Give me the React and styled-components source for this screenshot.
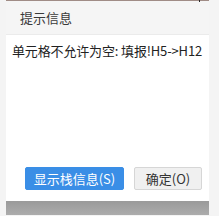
import React from "react";
import styled, { createGlobalStyle } from "styled-components";

const GlobalStyle = createGlobalStyle`
  html, body {
    margin: 0;
    padding: 0;
    background: #f4f4f4;
    font-family: "Noto Sans CJK SC", "Noto Sans", sans-serif;
  }
`;

const Page = styled.div`
  width: 219px;
  height: 216px;
  padding-left: 6px;
  box-sizing: border-box;
  overflow: hidden;
`;

const Dialog = styled.div`
  width: 203px;
  display: flex;
  flex-direction: column;
  border-top: 1px solid #a08c86;
  position: relative;
`;

const CloseEdge = styled.span`
  position: absolute;
  top: -1px;
  left: 193px;
  width: 1px;
  height: 2px;
  background: #2a2a2a;
`;

const Header = styled.div`
  height: 33px;
  background: #f5f5f5;
  border-bottom: 1px solid #ebebeb;
  display: flex;
  align-items: center;
  padding-left: 14px;
  font-size: 13px;
  color: #3a3a3a;
`;

const Body = styled.div`
  height: 166px;
  background: #ffffff;
  display: flex;
  flex-direction: column;
  box-sizing: border-box;
  padding: 7px 7px 11px 6px;
`;

const Message = styled.div`
  font-size: 13px;
  line-height: 18px;
  letter-spacing: -0.15px;
  color: #222;
  white-space: nowrap;
  flex: 1;
`;

const Actions = styled.div`
  display: flex;
  justify-content: flex-end;
  gap: 10px;
`;

const Button = styled.button`
  height: 23px;
  width: ${(p) => p.$w}px;
  padding: 0;
  font-family: inherit;
  font-size: 13px;
  border-radius: 2px;
  border: 1px solid ${(p) => (p.$primary ? "#3a8ee6" : "#d6d6d6")};
  background: ${(p) => (p.$primary ? "#3a8ee6" : "#f0f0f0")};
  color: ${(p) => (p.$primary ? "#ffffff" : "#333333")};
  display: flex;
  align-items: center;
  justify-content: center;
`;

const Shade = styled.div`
  height: 14px;
  background: linear-gradient(#9a9a9a, #acacac);
`;

export default function App() {
  return (
    <Page>
      <GlobalStyle />
      <Dialog>
        <CloseEdge />
        <Header>提示信息</Header>
        <Body>
          <Message>单元格不允许为空: 填报!H5-&gt;H12</Message>
          <Actions>
            <Button $primary $w={99}>显示栈信息(S)</Button>
            <Button $w={68}>确定(O)</Button>
          </Actions>
        </Body>
        <Shade />
      </Dialog>
    </Page>
  );
}
